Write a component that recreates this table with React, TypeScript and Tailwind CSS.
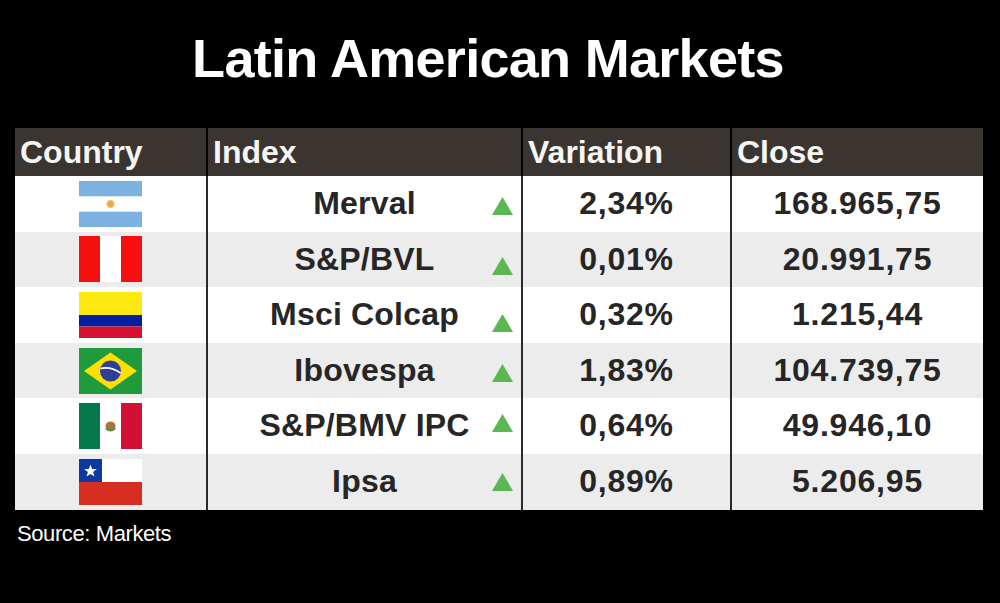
import React from "react";

type Row = { flag: string; index: string; variation: string; close: string; tri: number };

const rows: Row[] = [
  { flag: "ar", index: "Merval", variation: "2,34%", close: "168.965,75", tri: 21 },
  { flag: "pe", index: "S&P/BVL", variation: "0,01%", close: "20.991,75", tri: 25 },
  { flag: "co", index: "Msci Colcap", variation: "0,32%", close: "1.215,44", tri: 27 },
  { flag: "br", index: "Ibovespa", variation: "1,83%", close: "104.739,75", tri: 21 },
  { flag: "mx", index: "S&P/BMV IPC", variation: "0,64%", close: "49.946,10", tri: 16 },
  { flag: "cl", index: "Ipsa", variation: "0,89%", close: "5.206,95", tri: 19 },
];

function Flag({ code }: { code: string }) {
  const common = { width: 63, height: 46, viewBox: "0 0 63 46" };
  if (code === "ar")
    return (
      <svg {...common}>
        <rect width="63" height="46" fill="#ffffff" />
        <rect width="63" height="15.3" fill="#7cb2e2" />
        <rect y="30.7" width="63" height="15.3" fill="#7cb2e2" />
        <circle cx="31.5" cy="23" r="4.2" fill="#f1c27a" />
        <circle cx="31.5" cy="23" r="2.8" fill="#e8a84a" />
      </svg>
    );
  if (code === "pe")
    return (
      <svg {...common}>
        <rect width="63" height="46" fill="#ffffff" />
        <rect width="21" height="46" fill="#f5100f" />
        <rect x="42" width="21" height="46" fill="#f5100f" />
      </svg>
    );
  if (code === "co")
    return (
      <svg {...common}>
        <rect width="63" height="23" fill="#fde910" />
        <rect y="23" width="63" height="11.5" fill="#00209f" />
        <rect y="34.5" width="63" height="11.5" fill="#d8102f" />
      </svg>
    );
  if (code === "br")
    return (
      <svg {...common}>
        <rect width="63" height="46" fill="#1f9b3e" />
        <polygon points="31.5,4.5 58,23 31.5,41.5 5,23" fill="#fddf00" />
        <circle cx="31.5" cy="23" r="10.5" fill="#2e3f9a" />
        <path d="M21.5 20.5 Q31.5 18 41.6 25" stroke="#ffffff" strokeWidth="1.6" fill="none" />
      </svg>
    );
  if (code === "mx")
    return (
      <svg {...common}>
        <rect width="63" height="46" fill="#ffffff" />
        <rect width="21" height="46" fill="#04774b" />
        <rect x="42" width="21" height="46" fill="#d21034" />
        <ellipse cx="31.5" cy="23" rx="5" ry="4.5" fill="#a8743c" />
        <path d="M26.5 25.5 Q31.5 30 36.5 25.5" stroke="#3d8a4a" strokeWidth="1.4" fill="none" />
      </svg>
    );
  return (
    <svg {...common}>
      <rect width="63" height="23" fill="#ffffff" />
      <rect y="23" width="63" height="23" fill="#d62e20" />
      <rect width="23" height="23" fill="#0c3a9e" />
      <polygon
        points="11.5,5.5 13.1,10 17.9,10.1 14.1,13 15.5,17.6 11.5,14.9 7.5,17.6 8.9,13 5.1,10.1 9.9,10"
        fill="#ffffff"
      />
    </svg>
  );
}

function UpTriangle({ top }: { top: number }) {
  return (
    <svg width="21" height="18" viewBox="0 0 21 18" className="absolute right-[8px]" style={{ top }}>
      <polygon points="10.5,0 21,18 0,18" fill="#5bb654" />
    </svg>
  );
}

export default function App() {
  const font = { fontFamily: '"Liberation Sans", Arial, sans-serif' };
  return (
    <div className="w-[1000px] h-[603px] bg-black overflow-hidden" style={font}>
      <h1 className="pt-[31px] pr-[24px] text-center text-white font-bold text-[54px] leading-[54px] tracking-[-0.7px]">
        Latin American Markets
      </h1>
      <div className="mt-[43px] mx-[15px] w-[968px]">
        <div className="grid grid-cols-[191px_315px_209px_253px] h-[48px] bg-[#3a3531] text-[#f6f5f3] font-bold text-[32px] leading-[48px] tracking-[0px]">
          <div className="pl-[5px]">Country</div>
          <div className="pl-[5px] border-l-2 border-black">Index</div>
          <div className="pl-[5px] border-l-2 border-black">Variation</div>
          <div className="pl-[5px] border-l-2 border-black">Close</div>
        </div>
        {rows.map((r, i) => (
          <div
            key={r.index}
            className={`grid grid-cols-[191px_315px_209px_253px] h-[55.6px] text-[#262626] font-bold text-[32px] leading-[55.6px] ${
              i % 2 === 0 ? "bg-white" : "bg-[#ececec]"
            }`}
          >
            <div className="flex items-center justify-center">
              <Flag code={r.flag} />
            </div>
            <div className="relative text-center border-l-2 border-[#2a2a2a] tracking-[0.2px]">
              {r.index}
              <UpTriangle top={r.tri} />
            </div>
            <div className="text-center border-l-2 border-[#2a2a2a] tracking-[0.8px]">{r.variation}</div>
            <div className="text-center border-l-2 border-[#2a2a2a] tracking-[0.8px]">{r.close}</div>
          </div>
        ))}
      </div>
      <p className="mt-[10px] ml-[17px] text-white text-[22px] leading-[28px] tracking-[-0.4px]">Source: Markets</p>
    </div>
  );
}
